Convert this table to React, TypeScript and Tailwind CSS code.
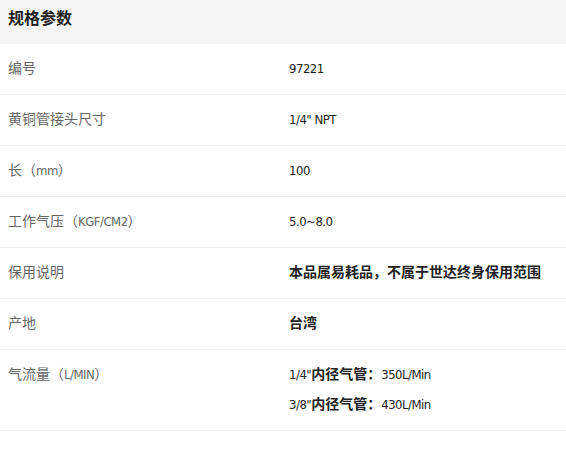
const specs: { label: string; values: string[] }[] = [
  { label: '编号', values: ['97221'] },
  { label: '黄铜管接头尺寸', values: ['1/4" NPT'] },
  { label: '长（mm）', values: ['100'] },
  { label: '工作气压（KGF/CM2）', values: ['5.0~8.0'] },
  { label: '保用说明', values: ['本品属易耗品，不属于世达终身保用范围'] },
  { label: '产地', values: ['台湾'] },
  { label: '气流量（L/MIN）', values: ['1/4"内径气管：350L/Min', '3/8"内径气管：430L/Min'] },
];

// split into latin / cjk runs so latin gets the narrow face
function Runs({ text, cjkClass }: { text: string; cjkClass: string }) {
  const parts = text.match(/[\u0020-\u007e]+|[^\u0020-\u007e]+/g) || [];
  return (
    <>
      {parts.map((p, i) =>
        /^[\u0020-\u007e]+$/.test(p) ? (
          <span key={i} className="font-['DejaVu_Sans',sans-serif] font-stretch-condensed text-[13px] tracking-[-0.5px]">
            {p}
          </span>
        ) : (
          <span key={i} className={cjkClass}>
            {p}
          </span>
        ),
      )}
    </>
  );
}

export default function App() {
  return (
    <div className="w-[566px] h-[457px] bg-white font-['Noto_Sans_CJK_SC',sans-serif]">
      <div className="h-[44px] bg-[#f5f5f5] px-2 pt-[6px]">
        <h2 className="text-[16px] leading-[22px] font-bold text-[#222]">规格参数</h2>
      </div>
      {specs.map((row) => (
        <div key={row.label} className="flex border-b border-[#eeeeee] px-2 pt-[8px] pb-[12px] text-[14px] leading-[30px]">
          <div className="w-[281px] h-[30px] text-[#666]">
            <Runs text={row.label} cjkClass="" />
          </div>
          <div className="flex-1 text-[#222]">
            {row.values.map((v) => (
              <div key={v} className="h-[30px]">
                <Runs text={v} cjkClass="font-bold" />
              </div>
            ))}
          </div>
        </div>
      ))}
    </div>
  );
}
